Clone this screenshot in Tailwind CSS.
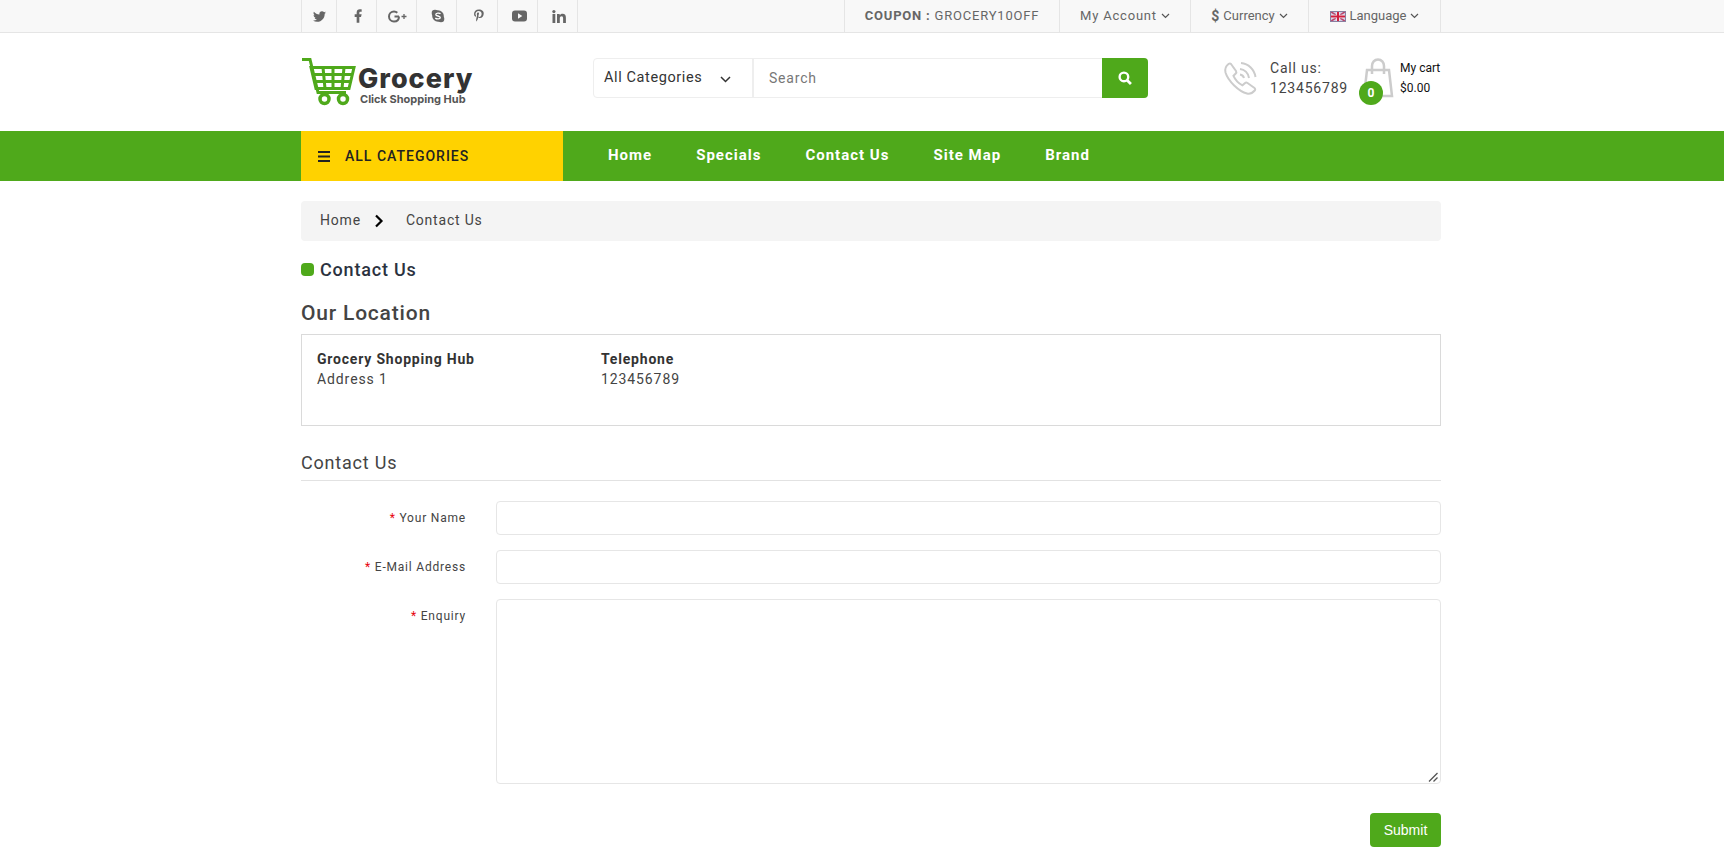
<!DOCTYPE html>
<html lang="en">
<head>
    <meta charset="UTF-8">
    <meta name="viewport" content="width=device-width, initial-scale=1.0">
    <title>Contact Us</title>
    <script src="https://cdn.jsdelivr.net/npm/@tailwindcss/browser@4"></script>
</head>
<body class="bg-white font-['Roboto',sans-serif] text-[#222] overflow-hidden h-[863px]">
    <!-- top bar -->
    <div class="h-[33px] bg-[#f8f8f8] border-b border-[#e5e5e5]">
        <div class="ml-[301px] w-[1140px] h-full flex justify-between text-[#666]">
            <div class="flex h-full border-l border-[#e5e5e5]">
                <div class="w-[35px] border-r border-[#e5e5e5] flex items-center justify-center">
                    <svg class="w-[13px] h-[13px] fill-[#666]" viewBox="0 0 24 24"><path d="M23.953 4.57a10 10 0 01-2.825.775 4.958 4.958 0 002.163-2.723c-.951.555-2.005.959-3.127 1.184a4.92 4.92 0 00-8.384 4.482C7.69 8.095 4.067 6.13 1.64 3.162a4.822 4.822 0 00-.666 2.475c0 1.71.87 3.213 2.188 4.096a4.904 4.904 0 01-2.228-.616v.06a4.923 4.923 0 003.946 4.827 4.996 4.996 0 01-2.212.085 4.936 4.936 0 004.604 3.417 9.867 9.867 0 01-6.102 2.105c-.39 0-.779-.023-1.17-.067a13.995 13.995 0 007.557 2.209c9.053 0 13.998-7.496 13.998-13.985 0-.21 0-.42-.015-.63A9.935 9.935 0 0024 4.59z"/></svg>
                </div>
                <div class="w-[40px] border-r border-[#e5e5e5] flex items-center justify-center pl-[2px]">
                    <svg class="w-[16px] h-[16px] fill-[#666]" viewBox="0 0 24 24"><path d="M14 13.5h2.5l1-4H14v-2c0-1.03 0-2 2-2h1.500V2.140c-.326-.043-1.557-.14-2.857-.14C11.928 2 10 3.657 10 6.700v2.800H7v4h3V22h4v-8.500z"/></svg>
                </div>
                <div class="w-[40px] border-r border-[#e5e5e5] flex items-center justify-center pl-[2px]">
                    <svg class="w-[19px] h-[13px] fill-none stroke-[#666]" viewBox="0 0 19 13"><path d="M11 6.500H6.500M11 6.500c0 3-2 5-5 5a5 5 0 0 1 0-10c1.400 0 2.500.5 3.300 1.300" stroke-width="2"/><path d="M13.500 6.500h5M16 4v5" stroke-width="1.300"/></svg>
                </div>
                <div class="w-[40px] border-r border-[#e5e5e5] flex items-center justify-center pl-[3px]">
                    <svg class="w-[14px] h-[14px]" viewBox="0 0 14 14"><circle cx="7" cy="7" r="5.800" fill="#666"/><circle cx="4" cy="4" r="3.300" fill="#666"/><circle cx="10" cy="10" r="3.300" fill="#666"/><path d="M9.500 4.800C8.500 3.700 4.700 3.800 4.800 5.600c.1 1.800 4.500 1 4.500 3 0 1.700-3.700 1.800-5 .4" fill="none" stroke="#fff" stroke-width="1.300"/></svg>
                </div>
                <div class="w-[41px] border-r border-[#e5e5e5] flex items-center justify-center pl-[3px]">
                    <svg class="w-[14px] h-[14px] fill-[#666]" viewBox="0 0 24 24"><path d="M12 1C6.500 1 3.500 4.700 3.500 8.600c0 1.800 1 4.100 2.600 4.800.2.1.4 0 .4-.2l.4-1.500c0-.2 0-.3-.1-.4-.5-.6-.9-1.700-.9-2.700 0-2.600 2-5.200 5.500-5.200 3 0 5.100 2 5.100 4.900 0 3.300-1.700 5.500-3.800 5.500-1.200 0-2-1-1.700-2.200.3-1.400 1-3 1-4 0-.9-.5-1.700-1.500-1.700-1.200 0-2.200 1.200-2.200 2.900 0 1 .4 1.800.4 1.800l-1.400 6c-.4 1.700 0 4.400.1 4.600 0 .1.2.2.3.1.1-.2 1.700-2.500 2.200-4.200l.8-3c.4.800 1.600 1.500 2.900 1.500 3.800 0 6.500-3.500 6.500-7.800C20.500 3.900 17 1 12 1z"/></svg>
                </div>
                <div class="w-[40px] border-r border-[#e5e5e5] flex items-center justify-center pl-[3px]">
                    <svg class="w-[15px] h-[12px]" viewBox="0 0 15 12"><rect width="15" height="11" y=".5" rx="3" fill="#666"/><path d="M6 3.300v5.400L10.300 6z" fill="#f8f8f8"/></svg>
                </div>
                <div class="w-[40px] border-r border-[#e5e5e5] flex items-center justify-center pl-[2px]">
                    <svg class="w-[14px] h-[13px] fill-[#666]" viewBox="0 0 14 13"><rect x=".5" y="4" width="2.800" height="9"/><circle cx="1.900" cy="1.600" r="1.600"/><path d="M5 4h2.700v1.300C8.200 4.400 9.300 3.800 10.500 3.800c2.500 0 3.400 1.500 3.400 4V13h-2.800V8.300c0-1.200-.4-2-1.400-2-1.200 0-1.900.8-1.900 2.100V13H5z"/></svg>
                </div>
            </div>
            <div class="flex h-full border-l border-[#e5e5e5] text-[13px]">
                <div class="w-[215px] border-r border-[#e5e5e5] flex items-center justify-center tracking-[0.8px]"><b class="font-bold mr-1">COUPON :</b> GROCERY10OFF</div>
                <div class="w-[131px] border-r border-[#e5e5e5] flex items-center justify-center gap-1 tracking-[0.8px]">My Account
                    <svg class="w-[9px] h-[6px] stroke-[#555] fill-none" viewBox="0 0 9 6"><path d="M1 1l3.500 3.500L8 1" stroke-width="1.200"/></svg>
                </div>
                <div class="w-[118px] border-r border-[#e5e5e5] flex items-center justify-center gap-1 text-[13px]"><b class="font-bold text-[14px]">$</b> Currency
                    <svg class="w-[9px] h-[6px] stroke-[#555] fill-none" viewBox="0 0 9 6"><path d="M1 1l3.500 3.500L8 1" stroke-width="1.200"/></svg>
                </div>
                <div class="w-[132px] border-r border-[#e5e5e5] flex items-center justify-center gap-1">
                    <svg class="w-[16px] h-[11px]" viewBox="0 0 16 11"><rect width="16" height="11" fill="#cfcfe6"/><path d="M0 0l16 11M16 0L0 11" stroke="#b8456a" stroke-width="1.500"/><path d="M8 0v11M0 5.500h16" stroke="#f0e8ee" stroke-width="3.500"/><path d="M8 0v11M0 5.500h16" stroke="#d02040" stroke-width="2"/><rect x=".5" y=".5" width="15" height="10" fill="none" stroke="#8a7fa0"/></svg>
                    Language
                    <svg class="w-[9px] h-[6px] stroke-[#555] fill-none" viewBox="0 0 9 6"><path d="M1 1l3.500 3.500L8 1" stroke-width="1.200"/></svg>
                </div>
            </div>
        </div>
    </div>

    <!-- header -->
    <div class="h-[98px] ml-[301px] w-[1140px] relative flex items-center pb-[9px]">
        <div class="w-[292px] flex items-start h-[50px] mt-[11px]">
            <svg class="w-[55px] h-[48px] shrink-0" viewBox="0 0 55 48" fill="none" stroke="#4fa91b">
                <path d="M1 1.500h8l8 33h28" stroke-width="3"/>
                <path d="M10 9.500h43l-5 21H15z" stroke-width="3"/>
                <path d="M12 16.500h39M14 23.500h35M22 9.500l2 21M32 9.500v21M43 9.500l-2 21" stroke-width="3"/>
                <circle cx="23.500" cy="41" r="4.500" stroke-width="3.500"/>
                <circle cx="42" cy="41" r="4.500" stroke-width="3.500"/>
            </svg>
            <div class="ml-[2px]">
                <div class="font-['Inter',sans-serif] font-extrabold text-[27px] leading-[28px] tracking-[1px] text-[#333] mt-[7px]">Grocery</div>
                <div class="font-['Inter',sans-serif] font-bold text-[11px] leading-[13px] text-[#555] ml-[2px]">Click Shopping Hub</div>
            </div>
        </div>
        <div class="w-[555px] h-[40px] flex border border-[#eee] rounded">
            <div class="w-[160px] border-r-2 border-[#eee] flex items-center pl-[10px] text-[14.5px] tracking-[0.6px] text-[#333] shrink-0">All Categories
                <svg class="ml-[18px] mt-[3px] w-[11px] h-[7px] stroke-[#333] fill-none" viewBox="0 0 11 7"><path d="M1 1l4.500 4.500L10 1" stroke-width="1.500"/></svg>
            </div>
            <input class="flex-1 min-w-0 pl-[15px] pt-[2px] text-[14px] tracking-[0.8px] outline-none placeholder:text-[#777]" placeholder="Search">
            <div class="w-[46px] -my-px -mr-px bg-[#4fa91b] rounded-r flex items-center justify-center">
                <svg class="w-[14px] h-[14px] stroke-white fill-none" viewBox="0 0 13 13"><circle cx="5.500" cy="5.500" r="4" stroke-width="2.200"/><path d="M8.500 8.500l3.500 3.500" stroke-width="2.600"/></svg>
            </div>
        </div>
        <div class="flex items-center ml-[74px]">
            <svg class="w-[36px] h-[36px] shrink-0 fill-none stroke-[#ccc]" viewBox="0 0 36 36"><path d="M9 4l5 7c.6 1 .3 2-.5 2.800l-2 2c1.500 3.500 5 7.500 9 9.500l2.300-2.100c.8-.7 1.800-.8 2.700-.2l7 5c.9.700.9 1.700.2 2.500-2 2.300-4.500 3.800-7.700 3-8-2-19-12.500-21.500-21C2.700 9.200 3.300 6.500 6.500 4c.8-.6 1.900-.7 2.500 0z" stroke-width="2"/><path d="M18 9c4.500.5 8.200 4 9 9M19 3c7.500.6 13.500 6.500 14.500 14M18 14.500c2 .3 3.500 1.800 4 3.500" stroke-width="2"/></svg>
            <div class="ml-[12px] text-[14px] leading-[20px] tracking-[0.8px] text-[#444] w-[80px]">
                <div>Call us:</div>
                <div>123456789</div>
            </div>
            <div class="relative w-[40px] h-[46px] ml-[10px] shrink-0">
                <svg class="absolute left-[2px] top-[3px] w-[32px] h-[40px] fill-none stroke-[#ccc]" viewBox="0 0 32 40"><path d="M5 12h22l3 26H2z" stroke-width="2.500"/><path d="M10 16V8c0-3.500 2.500-6.500 6-6.500s6 3 6 6.500v8" stroke-width="2.500"/></svg>
                <div class="absolute -left-px top-[26px] w-[24px] h-[24px] rounded-full bg-[#4fa91b] text-white text-[12px] font-bold flex items-center justify-center">0</div>
            </div>
            <div class="text-[12px] leading-[20px] text-[#111]">
                <div>My cart</div>
                <div>$0.00</div>
            </div>
        </div>
    </div>

    <!-- nav -->
    <div class="h-[50px] bg-[#4fa91b]">
        <div class="ml-[301px] w-[1140px] h-full flex">
            <div class="w-[262px] bg-[#ffd200] flex items-center pl-[17px] text-[14px] font-medium tracking-[1px] text-[#222]">
                <svg class="w-[12px] h-[11px] mr-[15px] fill-[#222]" viewBox="0 0 12 11"><rect width="12" height="2"/><rect y="4.500" width="12" height="2"/><rect y="9" width="12" height="2"/></svg>
                ALL CATEGORIES
            </div>
            <div class="flex items-center pl-[45px] gap-[44px] text-white font-bold text-[15px] tracking-[1px] pb-[1px]">
                <span>Home</span>
                <span>Specials</span>
                <span>Contact Us</span>
                <span>Site Map</span>
                <span>Brand</span>
            </div>
        </div>
    </div>

    <!-- main -->
    <div class="ml-[301px] w-[1140px]">
        <div class="mt-[20px] h-[40px] bg-[#f4f4f4] rounded flex items-center pl-[19px] pb-[1px] text-[14px] tracking-[0.8px] text-[#444]">
            <span>Home</span>
            <svg class="w-[10px] h-[14px] ml-[13px] mr-[13px] fill-none stroke-black" viewBox="0 0 10 14"><path d="M2 1.500L7.500 7 2 12.500" stroke-width="2.200"/></svg>
            <span class="ml-[9px]">Contact Us</span>
        </div>
        <div class="mt-[17px] flex items-center h-[22px]">
            <span class="w-[13px] h-[13px] rounded-[4px] bg-[#4fa91b] mr-[6px]"></span>
            <h1 class="text-[18px] font-medium tracking-[0.8px] text-[#2b3240]">Contact Us</h1>
        </div>
        <h2 class="mt-[19px] text-[21px] leading-[28px] font-medium tracking-[0.8px] text-[#444]">Our Location</h2>
        <div class="mt-[7px] h-[92px] border border-[#dadada] pl-[15px] pt-[14px] flex text-[14px] leading-[20px] tracking-[0.9px] text-[#444]">
            <div class="w-[284px]">
                <div class="font-bold text-[#333] tracking-[0.8px]">Grocery Shopping Hub</div>
                <div>Address 1</div>
            </div>
            <div>
                <div class="font-bold text-[#333] tracking-[0.8px]">Telephone</div>
                <div>123456789</div>
            </div>
        </div>
        <form>
            <div class="mt-[26px] h-[29px] border-b border-[#e2e2e2] text-[18px] leading-[22px] tracking-[0.8px] text-[#444]">Contact Us</div>
            <div class="mt-[20px] flex">
                <label class="w-[165px] text-right text-[12px] tracking-[0.8px] text-[#444] pt-[8px] shrink-0"><span class="text-red-600">*</span> Your Name</label>
                <input class="ml-[30px] flex-1 h-[34px] border border-[#e6e6e6] rounded">
            </div>
            <div class="mt-[15px] flex">
                <label class="w-[165px] text-right text-[12px] tracking-[0.8px] text-[#444] pt-[8px] shrink-0"><span class="text-red-600">*</span> E-Mail Address</label>
                <input class="ml-[30px] flex-1 h-[34px] border border-[#e6e6e6] rounded">
            </div>
            <div class="mt-[15px] flex">
                <label class="w-[165px] text-right text-[12px] tracking-[0.8px] text-[#444] pt-[8px] shrink-0"><span class="text-red-600">*</span> Enquiry</label>
                <div class="ml-[30px] flex-1 relative h-[185px]">
                    <textarea class="block w-full h-full border border-[#e6e6e6] rounded resize-none"></textarea>
                    <svg class="absolute right-[3px] bottom-[2px] w-[10px] h-[10px] stroke-[#555] fill-none pointer-events-none" viewBox="0 0 10 10"><path d="M1 9.500L9.500 1M5.500 9.500L9.500 5.500" stroke-width="1.300"/></svg>
                </div>
            </div>
            <div class="mt-[29px] flex justify-end">
                <button type="button" class="w-[71px] h-[34px] bg-[#4fa91b] text-white rounded font-['Liberation_Sans',sans-serif] text-[14px]">Submit</button>
            </div>
        </form>
    </div>
</body>
</html>
